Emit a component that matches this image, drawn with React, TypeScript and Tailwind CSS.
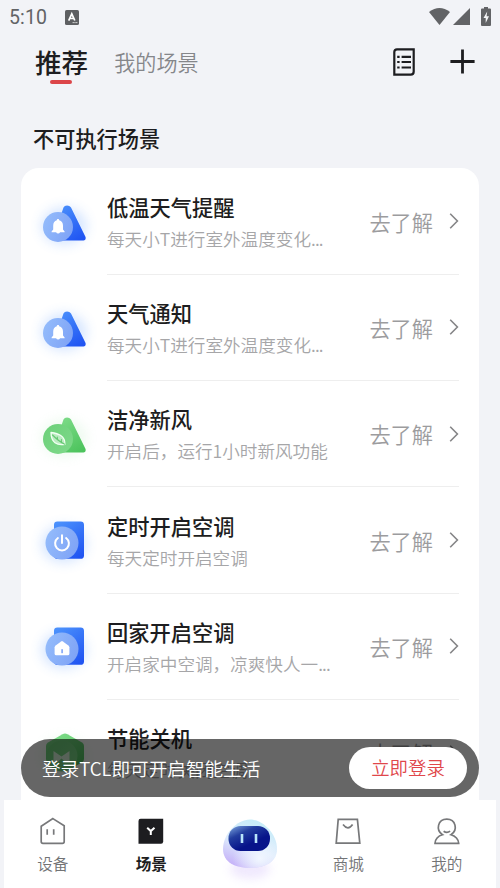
import type { ReactNode } from 'react';

type IconKind = 'bell' | 'leaf' | 'power' | 'home' | 'eco';

interface Scene {
  title: string;
  desc: string;
  icon: IconKind;
}

const SCENES: Scene[] = [
  { title: '低温天气提醒', desc: '每天小T进行室外温度变化…', icon: 'bell' },
  { title: '天气通知', desc: '每天小T进行室外温度变化…', icon: 'bell' },
  { title: '洁净新风', desc: '开启后，运行1小时新风功能', icon: 'leaf' },
  { title: '定时开启空调', desc: '每天定时开启空调', icon: 'power' },
  { title: '回家开启空调', desc: '开启家中空调，凉爽快人一…', icon: 'home' },
  { title: '节能关机', desc: '每天定时关闭空调', icon: 'eco' },
];

function Gradients() {
  return (
    <svg width="0" height="0" className="absolute">
      <defs>
        <linearGradient id="blue" x1="0.2" y1="0" x2="0.8" y2="1">
          <stop offset="0" stopColor="#4a90fc" />
          <stop offset="1" stopColor="#2054f2" />
        </linearGradient>
        <linearGradient id="blueDisc" x1="0" y1="0.3" x2="1" y2="0.7">
          <stop offset="0" stopColor="#93bbfb" />
          <stop offset="1" stopColor="#7fa3f6" />
        </linearGradient>
        <linearGradient id="green" x1="0.2" y1="0" x2="0.8" y2="1">
          <stop offset="0" stopColor="#7fdc8a" />
          <stop offset="1" stopColor="#4cc35c" />
        </linearGradient>
        <linearGradient id="greenDisc" x1="0" y1="0" x2="1" y2="1">
          <stop offset="0" stopColor="#6bd078" />
          <stop offset="1" stopColor="#7fd98b" />
        </linearGradient>
        <filter id="glow" x="-60%" y="-60%" width="220%" height="220%">
          <feGaussianBlur stdDeviation="6" />
        </filter>
      </defs>
    </svg>
  );
}

function SceneIcon({ kind }: { kind: IconKind }) {
  const green = kind === 'leaf' || kind === 'eco';
  const triangle = kind === 'bell' || kind === 'leaf';
  const fill = green ? 'url(#green)' : 'url(#blue)';
  const disc = green ? 'url(#greenDisc)' : 'url(#blueDisc)';

  return (
    <svg viewBox={triangle ? '1 1 64 64' : '1 2 64 64'} className="h-16 w-16 shrink-0 overflow-visible">
      <ellipse cx="32" cy="34" rx="23" ry="19" fill={green ? '#8be097' : '#4f93ff'} opacity={green ? 0.14 : 0.22} filter="url(#glow)" />
      {triangle && (
        <>
          <path d="M31.5 15.5C32.8 12.7 37.3 12.7 39 15.6L53.3 44.5C54.4 46.8 53.2 48.6 50.8 48.6H24Q20 48.6 21.6 44Z" fill={fill} />
          <circle cx="26" cy="35" r="15" fill={disc} />
        </>
      )}
      {kind === 'bell' && (
        <path d="M26 27.1C26.7 27.1 27.2 27.6 27.2 28.2C29.9 28.9 31 31 31 33.7V37.5L32.6 39.6V40.2H28.1Q27.5 41.6 26.1 41.6T24.1 40.2H19.6V39.6L21.2 37.5V33.7C21.2 31 22.3 28.9 24.8 28.2C24.8 27.6 25.3 27.1 26 27.1Z" fill="white" />
      )}
      {kind === 'leaf' && (
        <g strokeLinecap="round" strokeLinejoin="round">
          <path d="M19 28.5C26 29.6 33.3 31.5 32.9 40.4C25 41.8 19.1 38.6 19 28.5Z" fill="#bcebc2" stroke="#f2fff3" strokeWidth="1.3" />
          <path d="M20.5 31C23.5 34 28 38 32.7 40.3M25.5 35.7L25.3 33M29.3 38L29.4 35.5" fill="none" stroke="#65c972" strokeWidth="1.1" />
        </g>
      )}
      {(kind === 'power' || kind === 'home') && (
        <>
          <rect x="22" y="11.4" width="30" height="37.4" rx="3.4" fill={fill} />
          <circle cx="30" cy="33" r="16.5" fill={disc} />
        </>
      )}
      {kind === 'power' && (
        <path d="M25.9 28A6.9 6.9 0 1 0 34.1 28M30 25.2V33" fill="none" stroke="white" strokeWidth="2" strokeLinecap="round" />
      )}
      {kind === 'home' && (
        <>
          <path d="M29.1 25.4Q30 24.8 30.9 25.4L36.4 29.4Q37.4 30.2 37.4 31.3V37.7Q37.4 39.2 35.9 39.2H24.1Q22.6 39.2 22.6 37.7V31.3Q22.6 30.2 23.6 29.4Z" fill="white" />
          <rect x="29.3" y="33.2" width="1.6" height="4" fill="#7fa5f8" />
        </>
      )}
      {kind === 'eco' && (
        <>
          <path d="M30.5 12.2Q33 10.9 35.5 12.2L50 20.4Q52 21.6 52 24V37Q52 39.4 50 40.6L36 48Q33 49.4 30 48L16 40.6Q14 39.4 14 37V24Q14 21.6 16 20.4Z" fill={fill} />
          <circle cx="30" cy="34" r="15.5" fill={disc} />
          <path d="M21.5 29L29.5 34.5L37.5 29V40H33.5L29.5 36.5L25.5 40H21.5Z" fill="#d9f5dc" />
        </>
      )}
    </svg>
  );
}

function SceneRow({ scene, last }: { scene: Scene; last: boolean }) {
  return (
    <div className="flex h-[106.3px] shrink-0 items-stretch pr-5">
      <div className="flex w-[86px] shrink-0 items-center pt-1.5 pl-3">
        <SceneIcon kind={scene.icon} />
      </div>
      <div className={`flex min-w-0 flex-1 items-center border-b ${last ? 'border-transparent' : 'border-[#eeeeee]'}`}>
        <div className="min-w-0 flex-1 pt-[3px] whitespace-nowrap">
          <p className="text-[21.25px] leading-8 font-medium text-[#1d1d20]">{scene.title}</p>
          <p className="text-[17.6px] leading-8 font-[350] text-[#a6a6a8]">
            {scene.desc.replace('…', '')}
            {scene.desc.endsWith('…') && <span className="tracking-[-0.8px]">...</span>}
          </p>
        </div>
        <span className="shrink-0 pt-px text-[21.2px] leading-8 font-[350] text-[#9c9c9e]">去了解</span>
        <svg viewBox="0 0 10 16" className="ml-4 h-4 w-2.5 shrink-0" fill="none" stroke="#858587" strokeWidth="1.6">
          <path d="M1.2 0.8L8.4 8L1.2 15.2" />
        </svg>
      </div>
    </div>
  );
}

function StatusBar() {
  return (
    <div className="flex h-[34px] shrink-0 items-center justify-between pr-[9px] pl-[9px]">
      <div className="flex items-center gap-[18px]">
        <span className="pt-px font-[Roboto] text-[19.5px] leading-[34px] tracking-[0.1px] text-[#626366]">5:10</span>
        <svg viewBox="0 0 14 15" className="h-[15px] w-[14px]">
          <rect width="14" height="15" rx="1.6" fill="#5e5f62" />
          <path d="M3.7 10.7L6.8 3.8L9.8 10.5M4.9 8.5H8.6" fill="none" stroke="white" strokeWidth="1.7" />
          <path d="M7.7 12.6H12.5" stroke="white" strokeWidth="1" strokeDasharray="1 0.8" />
        </svg>
      </div>
      <div className="flex items-center pb-0.5">
        <svg viewBox="0 0 21 17" className="h-[17px] w-[21px]" fill="#626366">
          <path d="M0 4Q10.5 -4 21 4L10.5 17Z" />
        </svg>
        <svg viewBox="0 0 17 17" className="ml-[3px] h-[17px] w-[17px]" fill="#626366">
          <path d="M17 0V17H0Z" />
        </svg>
        <svg viewBox="0 0 10 19" className="ml-[11px] h-[19px] w-[10px]">
          <path d="M3 0H7V1.5H9Q10 1.5 10 2.5V18Q10 19 9 19H1Q0 19 0 18V2.5Q0 1.5 1 1.5H3Z" fill="#626366" />
          <path d="M6.2 4.5L2.5 11H4.7V16L8 9.3H5.6Z" fill="#f5f6f8" />
        </svg>
      </div>
    </div>
  );
}

function Header() {
  return (
    <header className="flex h-[56px] shrink-0 items-center justify-between pr-[25px] pl-[35px]">
      <div className="flex items-center">
        <div className="relative">
          <span className="text-[26.6px] leading-[56px] font-medium text-[#1d1d20]">推荐</span>
          <span className="absolute bottom-[6.5px] left-[15px] h-1 w-[21.5px] rounded-full bg-[#dc4549]" />
        </div>
        <span className="ml-[26px] pt-0.5 text-[21.1px] font-[350] text-[#85868a]">我的场景</span>
      </div>
      <div className="flex items-center pb-px">
        <svg viewBox="0 0 22 28" className="h-7 w-[22px]" fill="none" stroke="#1d1d20">
          <path d="M4 1.3H20.7V23.5Q20.7 26.7 17.7 26.7H1.3V4Q1.3 1.3 4 1.3Z" strokeWidth="2.2" />
          <path d="M8.6 8.8H18M8.6 14H18M8.6 19.5H18M4.2 8.8H6.6M4.2 14H6.6M4.2 19.5H6.6" strokeWidth="2.2" />
        </svg>
        <svg viewBox="0 0 25 25" className="ml-[35px] h-[25px] w-[25px]" fill="none" stroke="#1d1d20" strokeWidth="2.8">
          <path d="M12.5 0.4V24.6M0.4 12.5H24.6" />
        </svg>
      </div>
    </header>
  );
}

function LoginBanner() {
  return (
    <div className="absolute top-[739px] left-[21px] flex h-[58px] w-[458px] items-center justify-between rounded-full bg-black/60 pr-3 pl-[21px]">
      <span className="text-[18.6px] font-[350] text-white">登录TCL即可开启智能生活</span>
      <button className="h-[42px] w-[118px] rounded-full bg-white text-[18.4px] font-[350] text-[#e0474b]">立即登录</button>
    </div>
  );
}

function Robot() {
  return (
    <svg viewBox="0 0 70 76" className="h-[76px] w-[70px] overflow-visible">
      <defs>
        <linearGradient id="robotBody" x1="0.7" y1="0" x2="0.25" y2="1">
          <stop offset="0" stopColor="#c5edf8" />
          <stop offset="0.55" stopColor="#dceafc" />
          <stop offset="1" stopColor="#c4aef8" />
        </linearGradient>
        <radialGradient id="robotShine" cx="0.68" cy="0.8" r="0.5">
          <stop offset="0" stopColor="#f1f7ff" />
          <stop offset="1" stopColor="#f1f7ff" stopOpacity="0" />
        </radialGradient>
        <linearGradient id="visor" x1="0" y1="0" x2="0.55" y2="0.7">
          <stop offset="0" stopColor="#80a9e1" />
          <stop offset="0.48" stopColor="#233e9f" />
          <stop offset="1" stopColor="#07148a" />
        </linearGradient>
        <filter id="soft" x="-50%" y="-80%" width="200%" height="260%">
          <feGaussianBlur stdDeviation="5" />
        </filter>
        <filter id="edge">
          <feGaussianBlur stdDeviation="0.6" />
        </filter>
      </defs>
      <ellipse cx="35" cy="57" rx="20" ry="10" fill="#d9c8fb" opacity="0.4" filter="url(#soft)" />
      <g filter="url(#edge)">
        <path d="M35 7.5C48 7.5 62 22 62 37C62 50 50 56 35 56C20 56 8 50 8 37C8 22 22 7.5 35 7.5Z" fill="url(#robotBody)" />
        <path d="M35 7.5C48 7.5 62 22 62 37C62 50 50 56 35 56C20 56 8 50 8 37C8 22 22 7.5 35 7.5Z" fill="url(#robotShine)" />
      </g>
      <rect x="13.5" y="14" width="41.5" height="25" rx="12" fill="url(#visor)" />
      <path d="M27 22V31M41 22V31" stroke="#b9e5fa" strokeWidth="2.6" />
    </svg>
  );
}

function NavItem({ label, active = false, children }: { label: string; active?: boolean; children: ReactNode }) {
  return (
    <div className="flex flex-1 flex-col items-center pt-[17px]">
      <svg viewBox="0 0 28 28" className="h-7 w-7" fill="none" stroke="#77787a" strokeWidth="1.7">
        {children}
      </svg>
      <span className={`mt-1.5 text-[15.6px] leading-6 ${active ? 'font-bold text-[#1d1d20]' : 'font-[350] text-[#727375]'}`}>
        {label}
      </span>
    </div>
  );
}

function BottomNav() {
  return (
    <nav className="relative mr-1 ml-[3.5px] flex h-[88px] shrink-0 bg-white">
      <NavItem label="设备">
        <path d="M13.9 1.6L25.2 8.7V24.5Q25.2 26.3 23.4 26.3H4Q2.2 26.3 2.2 24.5V9.2ZM8.2 12.3V17.7M14.7 12.3V17.7" />
      </NavItem>
      <NavItem label="场景" active>
        <path d="M3.6 1.8H26.2V24.6Q26.2 26.8 24 26.8H1.5V4Q1.5 1.8 3.6 1.8Z" fill="#1d1d20" stroke="none" />
        <path d="M10.2 10.8L13.8 14.1L17.5 10.8M13.8 14V18" stroke="white" strokeWidth="2" />
      </NavItem>
      <div className="flex flex-1 justify-center pt-3">
        <Robot />
      </div>
      <NavItem label="商城">
        <path d="M4.2 2.4H23.4L25.8 26.2H2.2Z" />
        <path d="M9 7.6Q14 14.2 18.6 7.6" />
      </NavItem>
      <NavItem label="我的">
        <path d="M9.5 17.7C2.4 13 4.8 2.1 13.8 2.1S25.2 13 18 17.7C22.3 18.8 25.7 22.4 25.7 26.3H2C2 22.4 5.1 18.8 9.5 17.7Z" />
        <path d="M10.6 14.2Q13.9 16.7 17.1 14.2" />
      </NavItem>
    </nav>
  );
}

export default function App() {
  return (
    <div className="relative flex h-[888px] w-[500px] flex-col overflow-hidden bg-[#f2f3f7] font-['Noto_Sans_CJK_SC',sans-serif]">
      <Gradients />
      <StatusBar />
      <Header />
      <h2 className="mt-8 mb-3.5 pl-[33px] text-[21.2px] leading-8 font-medium text-[#1d1d20]">不可执行场景</h2>
      <section className="mx-[21px] flex min-h-0 flex-1 flex-col overflow-hidden rounded-t-[18px] bg-white pt-[0.5px]">
        {SCENES.map((scene, i) => (
          <SceneRow key={scene.title} scene={scene} last={i === SCENES.length - 1} />
        ))}
      </section>
      <BottomNav />
      <LoginBanner />
    </div>
  );
}
